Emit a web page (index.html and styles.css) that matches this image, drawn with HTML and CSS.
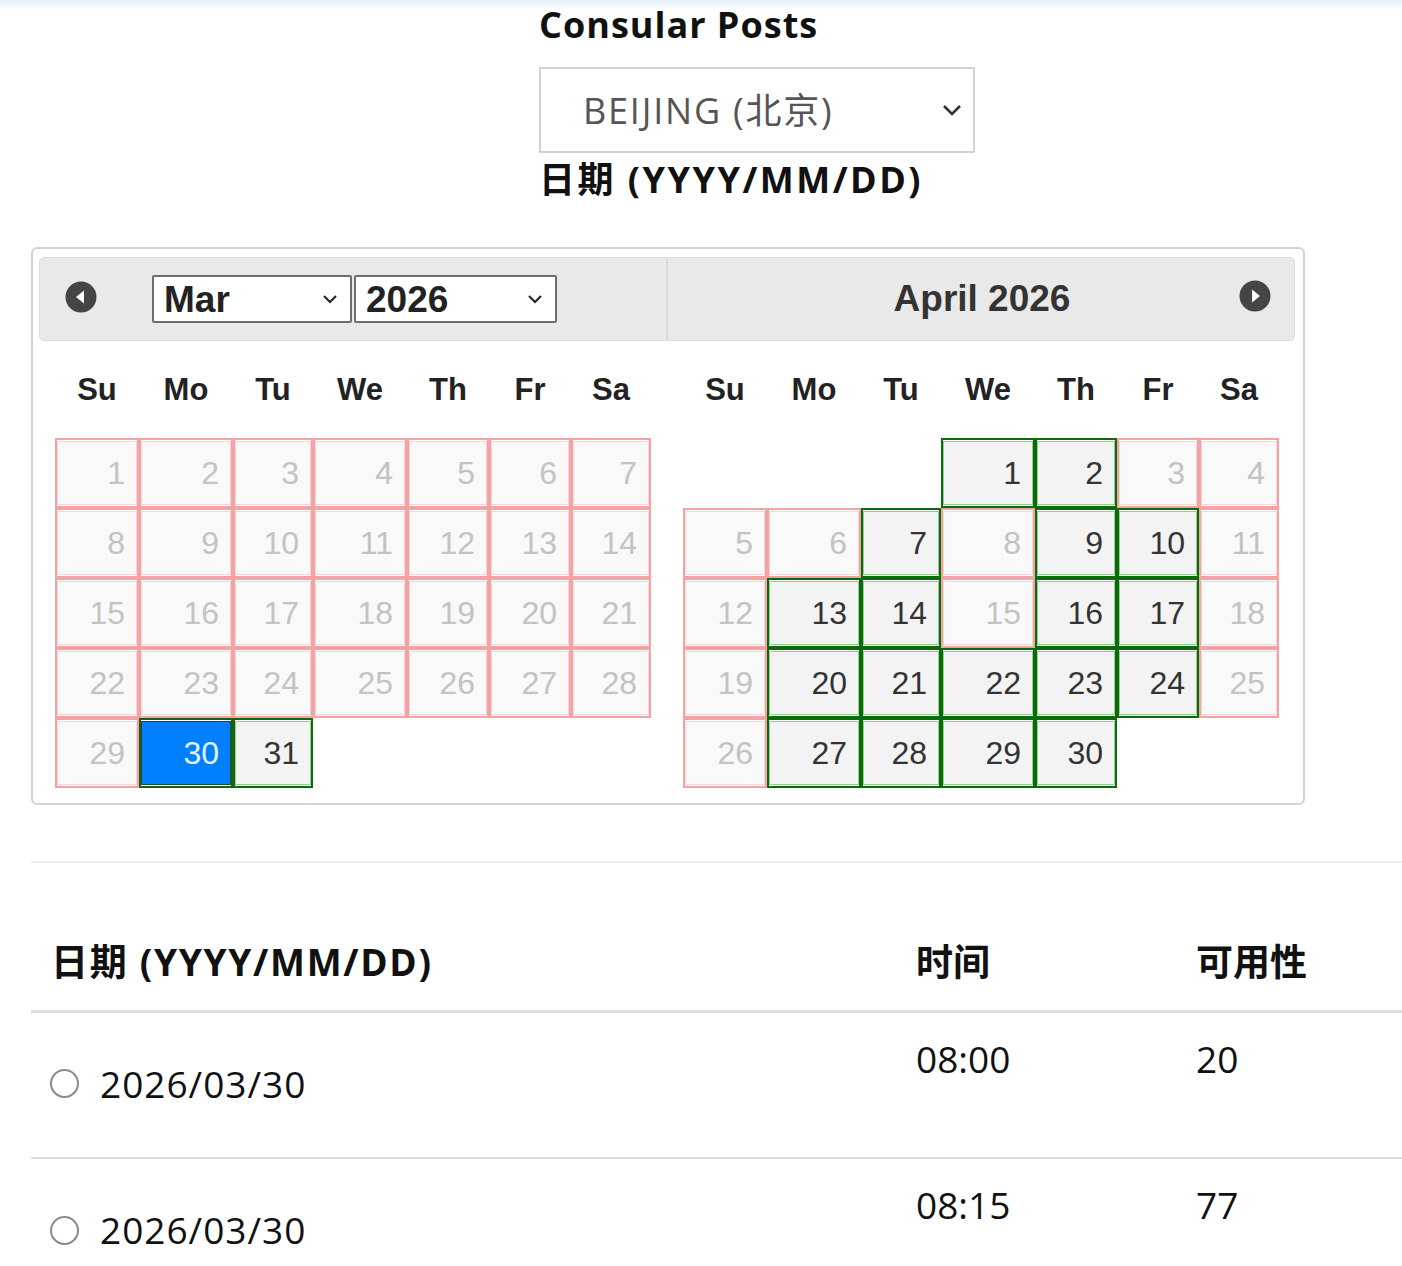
FILE: index.html
```html
<!DOCTYPE html>
<html lang="zh-CN">
<head>
    <meta charset="UTF-8">
    <meta name="viewport" content="width=device-width, initial-scale=1.0">
    <title>Appointment Schedule</title>
    <link rel="stylesheet" href="styles.css">
</head>
<body>
    <div class="post-form">
        <h2 class="field-title">Consular Posts</h2>
        <div class="select-wrap post-select">
            <select id="post">
                <option>BEIJING (北京)</option>
            </select>
            <svg class="chev" width="20" height="12" viewBox="0 0 20 12"><path d="M2 2 L10 10 L18 2" fill="none" stroke="#333" stroke-width="2.6"/></svg>
        </div>
        <h2 class="field-title date-title">日期 (YYYY/MM/DD)</h2>
    </div>

    <div class="datepicker">
        <!-- March -->
        <div class="month first">
            <div class="dp-header">
                <a class="nav prev" title="Prev">
                    <svg width="32" height="32" viewBox="0 0 32 32"><circle cx="16" cy="16" r="15.5" fill="#454545"/><path d="M11 16 L19 9.5 L19 22.5 Z" fill="#fff"/></svg>
                </a>
                <div class="select-wrap small month-select">
                    <select><option>Mar</option></select>
                    <svg class="chev" width="16" height="10" viewBox="0 0 16 10"><path d="M2 2 L8 8 L14 2" fill="none" stroke="#222" stroke-width="2"/></svg>
                </div>
                <div class="select-wrap small year-select">
                    <select><option>2026</option></select>
                    <svg class="chev" width="16" height="10" viewBox="0 0 16 10"><path d="M2 2 L8 8 L14 2" fill="none" stroke="#222" stroke-width="2"/></svg>
                </div>
            </div>
            <table class="cal">
                <thead>
                    <tr><th>Su</th><th>Mo</th><th>Tu</th><th>We</th><th>Th</th><th>Fr</th><th>Sa</th></tr>
                </thead>
                <tbody>
                    <tr>
                        <td class="off"><span>1</span></td><td class="off"><span>2</span></td><td class="off"><span>3</span></td><td class="off"><span>4</span></td><td class="off"><span>5</span></td><td class="off"><span>6</span></td><td class="off"><span>7</span></td>
                    </tr>
                    <tr>
                        <td class="off"><span>8</span></td><td class="off"><span>9</span></td><td class="off"><span>10</span></td><td class="off"><span>11</span></td><td class="off"><span>12</span></td><td class="off"><span>13</span></td><td class="off"><span>14</span></td>
                    </tr>
                    <tr>
                        <td class="off"><span>15</span></td><td class="off"><span>16</span></td><td class="off"><span>17</span></td><td class="off"><span>18</span></td><td class="off"><span>19</span></td><td class="off"><span>20</span></td><td class="off"><span>21</span></td>
                    </tr>
                    <tr>
                        <td class="off"><span>22</span></td><td class="off"><span>23</span></td><td class="off"><span>24</span></td><td class="off"><span>25</span></td><td class="off"><span>26</span></td><td class="off"><span>27</span></td><td class="off"><span>28</span></td>
                    </tr>
                    <tr>
                        <td class="off"><span>29</span></td><td class="sel"><span>30</span></td><td class="on"><span>31</span></td><td class="empty"></td><td class="empty"></td><td class="empty"></td><td class="empty"></td>
                    </tr>
                </tbody>
            </table>
        </div>

        <!-- April -->
        <div class="month last">
            <div class="dp-header">
                <div class="dp-title">April 2026</div>
                <a class="nav next" title="Next">
                    <svg width="32" height="32" viewBox="0 0 32 32"><circle cx="16" cy="16" r="15.5" fill="#454545"/><path d="M21 16 L13 9.5 L13 22.5 Z" fill="#fff"/></svg>
                </a>
            </div>
            <table class="cal">
                <thead>
                    <tr><th>Su</th><th>Mo</th><th>Tu</th><th>We</th><th>Th</th><th>Fr</th><th>Sa</th></tr>
                </thead>
                <tbody>
                    <tr>
                        <td class="empty"></td><td class="empty"></td><td class="empty"></td><td class="on"><span>1</span></td><td class="on"><span>2</span></td><td class="off"><span>3</span></td><td class="off"><span>4</span></td>
                    </tr>
                    <tr>
                        <td class="off"><span>5</span></td><td class="off"><span>6</span></td><td class="on"><span>7</span></td><td class="off"><span>8</span></td><td class="on"><span>9</span></td><td class="on"><span>10</span></td><td class="off"><span>11</span></td>
                    </tr>
                    <tr>
                        <td class="off"><span>12</span></td><td class="on"><span>13</span></td><td class="on"><span>14</span></td><td class="off"><span>15</span></td><td class="on"><span>16</span></td><td class="on"><span>17</span></td><td class="off"><span>18</span></td>
                    </tr>
                    <tr>
                        <td class="off"><span>19</span></td><td class="on"><span>20</span></td><td class="on"><span>21</span></td><td class="on"><span>22</span></td><td class="on"><span>23</span></td><td class="on"><span>24</span></td><td class="off"><span>25</span></td>
                    </tr>
                    <tr>
                        <td class="off"><span>26</span></td><td class="on"><span>27</span></td><td class="on"><span>28</span></td><td class="on"><span>29</span></td><td class="on"><span>30</span></td><td class="empty"></td><td class="empty"></td>
                    </tr>
                </tbody>
            </table>
        </div>
    </div>

    <hr class="divider">

    <table class="slots">
        <thead>
            <tr>
                <th class="col-date">日期 (YYYY/MM/DD)</th>
                <th class="col-time">时间</th>
                <th class="col-avail">可用性</th>
            </tr>
        </thead>
        <tbody>
            <tr>
                <td><label class="slot-label"><input type="radio" name="slot"> 2026/03/30</label></td>
                <td>08:00</td>
                <td>20</td>
            </tr>
            <tr>
                <td><label class="slot-label"><input type="radio" name="slot"> 2026/03/30</label></td>
                <td>08:15</td>
                <td>77</td>
            </tr>
        </tbody>
    </table>
</body>
</html>
```

FILE: styles.css
```css
html, body {
    margin: 0;
    padding: 0;
    overflow: hidden;
}
body {
    font-family: "Open Sans", "Noto Sans CJK SC", sans-serif;
    color: #111;
    background: #fff linear-gradient(#e4eff5, #fff 10px) no-repeat;
}

/* top form */
.post-form {
    padding-left: 539px;
    padding-top: 1px;
}
.field-title {
    margin: 0;
    font-size: 36px;
    font-weight: bold;
    line-height: 48px;
    height: 48px;
    letter-spacing: 1px;
}
.date-title {
    margin-top: 7px;
    line-height: 40px;
    height: 40px;
    letter-spacing: 2.5px;
}
.select-wrap {
    position: relative;
    display: inline-block;
}
.select-wrap select {
    appearance: none;
    -webkit-appearance: none;
    background: #fff;
    margin: 0;
    outline: none;
}
.select-wrap .chev {
    position: absolute;
    top: 50%;
    transform: translateY(-50%);
    pointer-events: none;
}
.post-select {
    margin-top: 18px;
}
.post-select select {
    width: 436px;
    height: 86px;
    border: 2px solid #d2d2d2;
    border-radius: 1px;
    padding: 0 0 0 42px;
    font-family: "Open Sans", "Noto Sans CJK SC", sans-serif;
    font-size: 36px;
    letter-spacing: 1.8px;
    color: #555;
}
.post-select .chev {
    right: 13px;
}

/* datepicker */
.datepicker {
    margin: 47px 0 0 31px;
    width: 1274px;
    box-sizing: border-box;
    border: 2px solid #d3d3d3;
    border-radius: 6px;
    padding: 8px 8px 15px 6px;
    display: flex;
    font-family: "Liberation Sans", Arial, sans-serif;
    color: #333;
}
.month {
    flex: 1;
}
.dp-header {
    position: relative;
    height: 84px;
    box-sizing: border-box;
    background: #e9e9e9;
    border: 1px solid #dcdcdc;
    display: flex;
    align-items: center;
}
.first .dp-header {
    border-radius: 5px 0 0 5px;
    padding-left: 25px;
}
.last .dp-header {
    border-radius: 0 5px 5px 0;
    border-left: 1px solid #d6d6d6;
}
.nav {
    display: flex;
    width: 32px;
    height: 32px;
    margin-top: -4px;
}
.next {
    position: absolute;
    right: 23px;
    top: 26px;
}
.month-select {
    margin-left: 55px;
}
.small select {
    height: 48px;
    border: 2px solid #6e6e6e;
    border-radius: 2px;
    padding: 0 0 0 10px;
    font-family: "Liberation Sans", Arial, sans-serif;
    font-size: 37px;
    font-weight: bold;
    color: #222;
}
.month-select select {
    width: 200px;
}
.year-select {
    margin-left: 2px;
}
.year-select select {
    width: 203px;
}
.small .chev {
    right: 14px;
}
.dp-title {
    flex: 1;
    text-align: center;
    font-size: 37px;
    font-weight: bold;
    color: #333;
    padding-left: 2px;
}

.cal {
    width: 596px;
    margin: 0 auto;
    border-collapse: separate;
    border-spacing: 0;
    table-layout: fixed;
}
.cal th {
    height: 97px;
    padding: 0;
    font-size: 31px;
    font-weight: bold;
    color: #222;
}
.cal th:nth-child(1) { width: 84px; }
.cal th:nth-child(2) { width: 94px; }
.cal th:nth-child(3) { width: 80px; }
.cal th:nth-child(4) { width: 94px; }
.cal th:nth-child(5) { width: 82px; }
.cal th:nth-child(6) { width: 82px; }
.cal th:nth-child(7) { width: 80px; }
.cal td {
    height: 70px;
    padding: 0;
    box-sizing: border-box;
    font-size: 32px;
}
.cal td span {
    display: block;
    height: 64px;
    line-height: 62px;
    text-align: right;
    padding-right: 11px;
    box-sizing: border-box;
    border: 1px solid transparent;
}
.cal td.off {
    border: 2px solid #f2a4a4;
}
.cal td.off span {
    background: #f9f9f9;
    border-color: #f6d6d6;
    color: #c3c3c3;
}
.cal td.on {
    border: 2px solid #0b6b0b;
}
.cal td.on span {
    background: #f3f3f3;
    border-color: #93cf93;
    color: #333;
}
.cal td.sel {
    border: 2px solid #1d5b22;
}
.cal td.sel span {
    background: #007fff;
    border-color: #16541e;
    color: #e2f6ff;
}

/* slot table */
.divider {
    margin: 56px 0 0 31px;
    border: none;
    border-top: 2px solid #eeeeee;
}
.slots {
    margin-left: 31px;
    width: 1371px;
    border-collapse: collapse;
    font-size: 37px;
}
.slots th {
    height: 148px;
    vertical-align: bottom;
    text-align: left;
    padding: 0 0 23px 20px;
    border-bottom: 3px solid #dedede;
    font-weight: bold;
    letter-spacing: 1.7px;
    box-sizing: border-box;
}
.slots th.col-time,
.slots th.col-avail {
    letter-spacing: 0;
}
.col-date {
    width: 865px;
}
.col-time {
    width: 280px;
}
.slots td {
    height: 147px;
    vertical-align: top;
    padding: 23px 0 0 20px;
    border-bottom: 2px solid #dedede;
    box-sizing: border-box;
    line-height: 46px;
}
.slot-label {
    display: flex;
    align-items: center;
    margin-top: 25px;
    margin-left: -1px;
    letter-spacing: 1px;
}
.slot-label input {
    appearance: none;
    -webkit-appearance: none;
    width: 29px;
    height: 29px;
    margin: 0 21px 0 0;
    border: 2px solid #8a8a8a;
    border-radius: 50%;
    background: #fff;
}
```
